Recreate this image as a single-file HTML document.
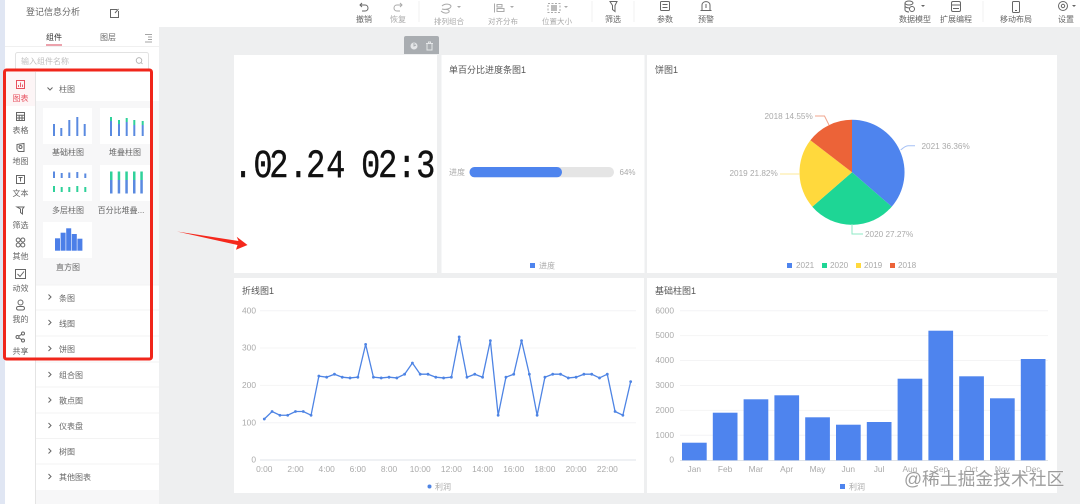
<!DOCTYPE html>
<html lang="zh-CN"><head><meta charset="utf-8"><title>登记信息分析</title>
<style>
html,body{margin:0;padding:0;width:1080px;height:504px;overflow:hidden;background:#eeeff0}
svg{display:block;position:absolute;left:0;top:0;filter:blur(.35px)}
text{font-family:"Liberation Sans","Noto Sans CJK SC",sans-serif;font-size:8px;fill:#666}
.m{text-anchor:middle}.e{text-anchor:end}
.tb{fill:#666}.dis{fill:#aaa}
.ax{fill:#aaa;font-size:8.4px}
.ttl{fill:#555;font-size:9px}
.pl{fill:#aaa;font-size:8.2px}
.ic{fill:none;stroke:#666;stroke-width:1}
.icd{fill:none;stroke:#aaa;stroke-width:1}
.sl{fill:#555}
.gr{stroke:#f4f4f5;stroke-width:1}
</style></head><body>
<svg width="1080" height="504" viewBox="0 0 1080 504" xmlns="http://www.w3.org/2000/svg">
<rect width="1080" height="504" fill="#eeeff0"/>
<rect x="0" width="5" height="504" fill="#e0e6f3"/>
<!-- header -->
<rect x="5" width="1075" height="27" fill="#fff"/>
<text x="26" y="15" style="font-size:9px" fill="#666">登记信息分析</text>
<path class="ic" d="M117 9.500H110.500V17.500H118.500V11M115 13L118.500 9" />
<!-- toolbar -->
<path class="ic" d="M362 3L360 5L362 7M360 5H365C369 5 369 11 365 11H362"/>
<text class="m tb" x="364" y="22">撤销</text>
<path class="icd" d="M400 3L402 5L400 7M402 5H397C393 5 393 11 397 11H400"/>
<text class="m dis" x="398" y="22">恢复</text>
<line x1="419" y1="1" x2="419" y2="22" stroke="#f2f2f2"/>
<path class="icd" d="M442 6C445 3 450 4 451 6C451 9 445 10 442 9M444 9.500C447 9 450 10 449 12C447 14 443 13 441 11"/>
<path d="M457 6L461 6L459 8Z" fill="#aaa"/>
<text class="m dis" x="449" y="24" style="font-size:7.500px">排列组合</text>
<path class="icd" d="M494.500 3.500V12.500M497 4.500H502V7H497ZM497 8.500H504V11.500H497Z"/>
<path d="M510 6L514 6L512 8Z" fill="#aaa"/>
<text class="m dis" x="503" y="24" style="font-size:7.500px">对齐分布</text>
<rect x="551" y="5" width="6" height="6" fill="#bbb"/>
<path class="icd" stroke-dasharray="2 1.500" d="M548 3.500H560V12.500H548Z"/>
<path d="M564 6L568 6L566 8Z" fill="#aaa"/>
<text class="m dis" x="557" y="24" style="font-size:7.500px">位置大小</text>
<line x1="592" y1="1" x2="592" y2="22" stroke="#f2f2f2"/>
<path class="ic" d="M610 1.500H617L615 5.500V11.500L612.500 9.500V5.500Z"/>
<text class="m tb" x="613" y="22">筛选</text>
<line x1="634" y1="1" x2="634" y2="22" stroke="#f2f2f2"/>
<rect class="ic" x="660.500" y="1.500" width="9" height="9" rx="1"/>
<path class="ic" d="M662.500 4.500H667.500M662.500 7.500H667.500"/>
<text class="m tb" x="665" y="22">参数</text>
<path class="ic" d="M702 10.500V5C702 0.500 710 0.500 710 5V10.500ZM700.500 10.500H711.500M706 4V8"/>
<text class="m tb" x="706" y="22">预警</text>
<ellipse class="ic" cx="909" cy="3" rx="4" ry="2"/>
<path class="ic" d="M905 3V10C905 11 907 12 909 12M905 6.500C906 7.500 908 8 910 8"/>
<circle class="ic" cx="912" cy="9" r="2.500"/>
<path d="M921 5L925 5L923 7Z" fill="#666"/>
<text class="m tb" x="915" y="22">数据模型</text>
<rect class="ic" x="951.500" y="1.500" width="9" height="10" rx="1.500"/>
<path class="ic" d="M951.500 5H960.500M953 8.500H959"/>
<text class="m tb" x="956" y="22">扩展编程</text>
<line x1="983" y1="1" x2="983" y2="22" stroke="#f2f2f2"/>
<rect class="ic" x="1012.500" y="1.500" width="7" height="11" rx="1"/>
<path class="ic" d="M1015 10.500H1017"/>
<text class="m tb" x="1016" y="22">移动布局</text>
<circle class="ic" cx="1063" cy="6" r="4.500"/><circle class="ic" cx="1063" cy="6" r="1.700"/>
<path d="M1072 5L1076 5L1074 7Z" fill="#666"/>
<text class="m tb" x="1066" y="22">设置</text>

<!-- sidebar -->
<rect x="5" y="27" width="154" height="477" fill="#fff"/>
<text class="m" x="54" y="40" fill="#333" style="fill:#333">组件</text>
<rect x="46" y="44.500" width="16" height="1" fill="#d9455a"/>
<text class="m" x="108" y="40">图层</text>
<path d="M145 34.500H152M148 37H152M148 39.500H152M145 42H152" fill="none" stroke="#888" stroke-width=".8"/>
<line x1="5" y1="46.500" x2="159" y2="46.500" stroke="#f0f0f0"/>
<rect x="15.500" y="52.500" width="133" height="18" rx="2" fill="#fff" stroke="#e2e2e2"/>
<text x="21" y="64" style="fill:#c0c0c0">输入组件名称</text>
<circle cx="139" cy="60.500" r="2.800" fill="none" stroke="#aaa" stroke-width=".8"/>
<path d="M141 62.500L142.500 64" stroke="#aaa" stroke-width=".8"/>
<rect x="5" y="72" width="31" height="34" fill="#fdf5f6"/>
<line x1="35.500" y1="72" x2="35.500" y2="504" stroke="#e4e4e4"/>
<!-- left icons -->
<rect x="16.500" y="80.500" width="8" height="8" fill="none" stroke="#e8505e" stroke-width="1"/>
<path d="M18.500 87V85M20.500 87V82.500M22.500 87V84.500" stroke="#e8505e" stroke-width=".9"/>
<text class="m" x="20.500" y="101" style="fill:#e8505e">图表</text>
<rect class="ic" x="16.500" y="112.500" width="8" height="8"/>
<path class="ic" d="M16.500 115.200H24.500M16.500 118H24.500M19.200 115.200V120.500M22 115.200V120.500" stroke-width=".7"/>
<text class="m" x="20.500" y="133">表格</text>
<path class="ic" d="M17 144.500L24 143.500V151.500H18.500L17 149.500Z"/>
<circle class="ic" cx="20.500" cy="147" r="1.500" stroke-width=".7"/>
<text class="m" x="20.500" y="164">地图</text>
<rect class="ic" x="16.500" y="175.500" width="8" height="8"/>
<path class="ic" d="M18.500 177.500H22.500M20.500 177.500V181.500"/>
<text class="m" x="20.500" y="196">文本</text>
<path class="ic" d="M17 207H24L22.500 209V214L20.500 212.500V209Z"/>
<text class="m" x="20.500" y="228">筛选</text>
<circle class="ic" cx="18.200" cy="240" r="2"/><circle class="ic" cx="22.800" cy="240" r="2"/><circle class="ic" cx="18.200" cy="245" r="2"/><circle class="ic" cx="22.800" cy="245" r="2"/>
<text class="m" x="20.500" y="259">其他</text>
<rect class="ic" x="15.500" y="269.500" width="10" height="9"/>
<path class="ic" d="M17.500 274L20 276.500L24 271.500"/>
<text class="m" x="20.500" y="291">动效</text>
<circle class="ic" cx="20.500" cy="302.500" r="2.500"/>
<rect class="ic" x="16.500" y="306.500" width="8" height="3.500" rx="1.700"/>
<text class="m" x="20.500" y="322">我的</text>
<circle class="ic" cx="17.500" cy="337" r="1.500"/><circle class="ic" cx="23" cy="333.500" r="1.500"/><circle class="ic" cx="23" cy="340.500" r="1.500"/>
<path class="ic" d="M19 336L21.700 334.300M19 338L21.700 339.700" stroke-width=".8"/>
<text class="m" x="20.500" y="354">共享</text>

<!-- panel -->
<rect x="36" y="101" width="123" height="184" fill="#f7f7f8"/>
<path class="ic" d="M47.500 87.500L50 90L52.500 87.500"/>
<text x="59" y="92">柱图</text>
<!-- thumbs -->
<g fill="#fff">
<rect x="43" y="108" width="49" height="36"/><rect x="100" y="108" width="50" height="36"/>
<rect x="43" y="165" width="49" height="36"/><rect x="100" y="165" width="50" height="36"/>
<rect x="43" y="222" width="49" height="36"/>
</g>
<g fill="#5a8ae0">
<rect x="53" y="124" width="2" height="12"/><rect x="60.300" y="128" width="2" height="8"/><rect x="68.300" y="120" width="2" height="16"/><rect x="76.300" y="117" width="2" height="19"/><rect x="83.700" y="124" width="2" height="12"/>
<rect x="110" y="121" width="2" height="15"/><rect x="118" y="124" width="2" height="12"/><rect x="125.700" y="122" width="2" height="14"/><rect x="133.300" y="125" width="2" height="11"/><rect x="141.700" y="125" width="2" height="11"/>
<rect x="53" y="171.500" width="2" height="6.500"/><rect x="60.700" y="173" width="2" height="5"/><rect x="68.300" y="172.500" width="2" height="5.500"/><rect x="76.300" y="172" width="2" height="6"/><rect x="84.300" y="173.500" width="2" height="4.500"/>
<rect x="110" y="180" width="2.500" height="13.500"/><rect x="117.700" y="180" width="2.500" height="13.500"/><rect x="125.300" y="180" width="2.500" height="13.500"/><rect x="133" y="180" width="2.500" height="13.500"/><rect x="140.300" y="180" width="2.500" height="13.500"/>
</g>
<g fill="#2fd19a">
<rect x="110" y="117" width="2" height="4"/><rect x="118" y="120" width="2" height="4"/><rect x="125.700" y="118" width="2" height="4"/><rect x="133.300" y="120" width="2" height="5"/><rect x="141.700" y="121" width="2" height="4"/>
<rect x="53" y="186" width="2" height="6"/><rect x="60.700" y="187" width="2" height="5"/><rect x="68.300" y="187" width="2" height="5"/><rect x="76.300" y="186" width="2" height="6"/><rect x="84.300" y="187" width="2" height="5"/>
<rect x="110" y="171.500" width="2.500" height="8.500"/><rect x="117.700" y="171.500" width="2.500" height="8.500"/><rect x="125.300" y="171.500" width="2.500" height="8.500"/><rect x="133" y="171.500" width="2.500" height="8.500"/><rect x="140.300" y="171.500" width="2.500" height="8.500"/>
</g>
<g fill="#4c7fe8">
<rect x="55" y="238.300" width="5" height="12.400"/><rect x="60.600" y="232.700" width="5" height="18"/><rect x="66.200" y="228.300" width="5" height="22.400"/><rect x="71.800" y="234" width="5" height="16.700"/><rect x="77.400" y="238.700" width="5" height="12"/>
</g>
<text class="m" x="68" y="155">基础柱图</text>
<text class="m" x="125" y="155">堆叠柱图</text>
<text class="m" x="68" y="213">多层柱图</text>
<text class="m" x="121" y="213">百分比堆叠...</text>
<text class="m" x="68" y="270">直方图</text>
<!-- accordion -->
<g stroke="#f3f3f3">
<line x1="36" y1="285" x2="159" y2="285"/><line x1="36" y1="310" x2="159" y2="310"/><line x1="36" y1="336" x2="159" y2="336"/><line x1="36" y1="362" x2="159" y2="362"/><line x1="36" y1="387" x2="159" y2="387"/><line x1="36" y1="413" x2="159" y2="413"/><line x1="36" y1="438.500" x2="159" y2="438.500"/><line x1="36" y1="464" x2="159" y2="464"/>
</g>
<rect x="36" y="490" width="123" height="14" fill="#f7f7f8"/>
<path class="ic" d="M48.500 294.500L51 297L48.500 299.500M48.500 320L51 322.500L48.500 325M48.500 346L51 348.500L48.500 351M48.500 372L51 374.500L48.500 377M48.500 397.500L51 400L48.500 402.500M48.500 423L51 425.500L48.500 428M48.500 448.500L51 451L48.500 453.500M48.500 474L51 476.500L48.500 479"/>
<text x="59" y="301">条图</text>
<text x="59" y="326.500">线图</text>
<text x="59" y="352">饼图</text>
<text x="59" y="378">组合图</text>
<text x="59" y="403.500">散点图</text>
<text x="59" y="429">仪表盘</text>
<text x="59" y="454.500">树图</text>
<text x="59" y="480">其他图表</text>

<!-- cards -->
<g fill="#fff">
<rect x="234" y="55" width="203" height="218"/>
<rect x="441.500" y="55" width="203" height="218"/>
<rect x="647" y="55" width="410" height="218"/>
<rect x="234" y="278" width="410" height="215"/>
<rect x="647" y="278" width="410" height="215"/>
</g>
<!-- floating toolbar -->
<path d="M404 54V38Q404 36 406 36H437Q439 36 439 38V54Z" fill="#a9adb1"/>
<circle cx="414" cy="46" r="3.500" fill="#e4e6e8"/><path d="M414 43V46L416 45" stroke="#a9adb1" fill="none"/>
<path d="M426 43.500H433M427 44V50H432V44M428.500 43V42H430.500V43" fill="none" stroke="#e4e6e8"/>

<!-- clock -->
<clipPath id="cp"><rect x="234" y="55" width="203" height="218"/></clipPath>
<g clip-path="url(#cp)">
<text transform="translate(0,177) scale(.8,1)" x="291.800 316.800 336.500 360.900 382.600 407.600 430 451.400 472.600 496.400 520.100" y="0" style="font-family:'Liberation Mono',monospace;font-size:40px;fill:#111;stroke:#111;stroke-width:.4px">.02.24 02:3</text>
</g>

<!-- progress card -->
<text class="ttl" x="449" y="73">单百分比进度条图1</text>
<text x="449" y="175" style="fill:#aaa">进度</text>
<rect x="469.500" y="167" width="144.500" height="10.300" rx="5" fill="#e5e5e5"/>
<rect x="469.500" y="167" width="92.500" height="10.300" rx="5" fill="#4e84ee"/>
<text x="619.500" y="175" style="fill:#aaa">64%</text>
<rect x="530" y="263" width="5" height="5" fill="#4e84ee"/>
<text x="539" y="268.500" style="fill:#aaa">进度</text>

<!-- pie -->
<text class="ttl" x="655" y="73">饼图1</text>
<path d="M852 172.300V119.800A52.500 52.500 0 0 1 891.700 206.700Z" fill="#4e84ee"/>
<path d="M852 172.300L891.700 206.700A52.500 52.500 0 0 1 812.300 206.700Z" fill="#1ed695"/>
<path d="M852 172.300L812.300 206.700A52.500 52.500 0 0 1 810.400 140.300Z" fill="#ffd93d"/>
<path d="M852 172.300L810.400 140.300A52.500 52.500 0 0 1 852 119.800Z" fill="#ec6338"/>
<path d="M900.700 150Q905 146 908 145.700H915" fill="none" stroke="#a6c1f5"/>
<path d="M815 116H824.500L829 125" fill="none" stroke="#f0a48c"/>
<path d="M780 174H800" fill="none" stroke="#fde89a"/>
<path d="M852 224V234H863" fill="none" stroke="#8ee8c6"/>
<text class="pl" x="921.500" y="149">2021 36.36%</text>
<text class="pl" x="764.500" y="119">2018 14.55%</text>
<text class="pl" x="729.500" y="176">2019 21.82%</text>
<text class="pl" x="865" y="237">2020 27.27%</text>
<rect x="787" y="263" width="5" height="5" fill="#4e84ee"/><text class="pl" x="796" y="268">2021</text>
<rect x="822" y="263" width="5" height="5" fill="#1ed695"/><text class="pl" x="830" y="268">2020</text>
<rect x="856" y="263" width="5" height="5" fill="#ffd93d"/><text class="pl" x="864" y="268">2019</text>
<rect x="890" y="263" width="5" height="5" fill="#ec6338"/><text class="pl" x="898" y="268">2018</text>

<!-- line chart -->
<text class="ttl" x="242" y="294">折线图1</text>
<g class="gr"><line x1="260" y1="310.700" x2="636" y2="310.700"/><line x1="260" y1="348" x2="636" y2="348"/><line x1="260" y1="385.400" x2="636" y2="385.400"/><line x1="260" y1="422.700" x2="636" y2="422.700"/></g>
<line x1="260" y1="460" x2="636" y2="460" stroke="#dfe3e8"/>
<g class="ax">
<text class="ax e" x="256" y="313.500">400</text><text class="ax e" x="256" y="350.500">300</text><text class="ax e" x="256" y="388">200</text><text class="ax e" x="256" y="425.500">100</text><text class="ax e" x="256" y="462.500">0</text>
<text class="ax m" x="264.300" y="472">0:00</text><text class="ax m" x="295.500" y="472">2:00</text><text class="ax m" x="326.700" y="472">4:00</text><text class="ax m" x="357.800" y="472">6:00</text><text class="ax m" x="389" y="472">8:00</text><text class="ax m" x="420.200" y="472">10:00</text><text class="ax m" x="451.400" y="472">12:00</text><text class="ax m" x="482.600" y="472">14:00</text><text class="ax m" x="513.700" y="472">16:00</text><text class="ax m" x="544.900" y="472">18:00</text><text class="ax m" x="576.100" y="472">20:00</text><text class="ax m" x="607.300" y="472">22:00</text>
</g>
<g transform="translate(264.300,460) scale(7.795,-0.373)">
<polyline fill="none" stroke="#4e84e4" stroke-width="1.300" vector-effect="non-scaling-stroke" points="0,110 1,130 2,120 3,120 4,130 5,130 6,120 7,225 8,222 9,230 10,222 11,220 12,222 13,310 14,222 15,220 16,222 17,220 18,230 19,260 20,230 21,230 22,222 23,220 24,222 25,330 26,222 27,230 28,222 29,320 30,120 31,222 32,230 33,320 34,230 35,120 36,222 37,230 38,230 39,220 40,222 41,230 42,230 43,220 44,230 45,130 46,120 47,210"/>
<path fill="none" stroke="#4e84e4" stroke-width="2.800" stroke-linecap="round" vector-effect="non-scaling-stroke" d="M0 110h.001M1 130h.001M2 120h.001M3 120h.001M4 130h.001M5 130h.001M6 120h.001M7 225h.001M8 222h.001M9 230h.001M10 222h.001M11 220h.001M12 222h.001M13 310h.001M14 222h.001M15 220h.001M16 222h.001M17 220h.001M18 230h.001M19 260h.001M20 230h.001M21 230h.001M22 222h.001M23 220h.001M24 222h.001M25 330h.001M26 222h.001M27 230h.001M28 222h.001M29 320h.001M30 120h.001M31 222h.001M32 230h.001M33 320h.001M34 230h.001M35 120h.001M36 222h.001M37 230h.001M38 230h.001M39 220h.001M40 222h.001M41 230h.001M42 230h.001M43 220h.001M44 230h.001M45 130h.001M46 120h.001M47 210h.001"/>
</g>
<circle cx="429.500" cy="486.500" r="2" fill="#4e84e4"/>
<text x="435" y="489.500" style="fill:#aaa">利润</text>

<!-- bar chart -->
<text class="ttl" x="655" y="294">基础柱图1</text>
<g class="gr"><line x1="680" y1="310.700" x2="1048" y2="310.700"/><line x1="680" y1="335.600" x2="1048" y2="335.600"/><line x1="680" y1="360.500" x2="1048" y2="360.500"/><line x1="680" y1="385.500" x2="1048" y2="385.500"/><line x1="680" y1="410.400" x2="1048" y2="410.400"/><line x1="680" y1="435.300" x2="1048" y2="435.300"/></g>
<line x1="680" y1="460.500" x2="1048" y2="460.500" stroke="#dfe3e8"/>
<text class="ax e" x="674" y="313.500">6000</text><text class="ax e" x="674" y="338">5000</text><text class="ax e" x="674" y="363">4000</text><text class="ax e" x="674" y="388">3000</text><text class="ax e" x="674" y="413">2000</text><text class="ax e" x="674" y="438">1000</text><text class="ax e" x="674" y="462.500">0</text>
<g fill="#4e84ee">
<rect x="682" y="442.700" width="24.700" height="17.600"/><rect x="712.800" y="412.700" width="24.700" height="47.600"/><rect x="743.600" y="399.300" width="24.700" height="61"/><rect x="774.400" y="395.300" width="24.700" height="65"/><rect x="805.200" y="417.300" width="24.700" height="43"/><rect x="836" y="424.700" width="24.700" height="35.600"/><rect x="866.800" y="422" width="24.700" height="38.300"/><rect x="897.600" y="378.700" width="24.700" height="81.600"/><rect x="928.400" y="330.700" width="24.700" height="129.600"/><rect x="959.200" y="376.300" width="24.700" height="84"/><rect x="990" y="398.300" width="24.700" height="62"/><rect x="1020.800" y="359" width="24.700" height="101.300"/>
</g>
<g>
<text class="ax m" x="694.300" y="472">Jan</text><text class="ax m" x="725.100" y="472">Feb</text><text class="ax m" x="755.900" y="472">Mar</text><text class="ax m" x="786.700" y="472">Apr</text><text class="ax m" x="817.500" y="472">May</text><text class="ax m" x="848.300" y="472">Jun</text><text class="ax m" x="879.100" y="472">Jul</text><text class="ax m" x="909.900" y="472">Aug</text><text class="ax m" x="940.700" y="472">Sep</text><text class="ax m" x="971.500" y="472">Oct</text><text class="ax m" x="1002.300" y="472">Nov</text><text class="ax m" x="1033.100" y="472">Dec</text>
</g>
<rect x="840" y="484" width="5" height="5" fill="#4e84ee"/>
<text x="849" y="489.500" style="fill:#aaa">利润</text>
<text x="904" y="485" style="font-size:17.800px;fill:#8d8d8d;stroke:#fff;stroke-width:.5px;paint-order:stroke;opacity:.85">@稀土掘金技术社区</text>

<!-- annotations -->
<rect x="4.500" y="70" width="147" height="289" rx="2" fill="none" stroke="#f0261b" stroke-width="3"/>
<polygon points="177,231.500 238.500,241 236.700,236.800 247.500,245 236,249.800 237.500,245" fill="#f5281c"/>
</svg>
</body></html>
